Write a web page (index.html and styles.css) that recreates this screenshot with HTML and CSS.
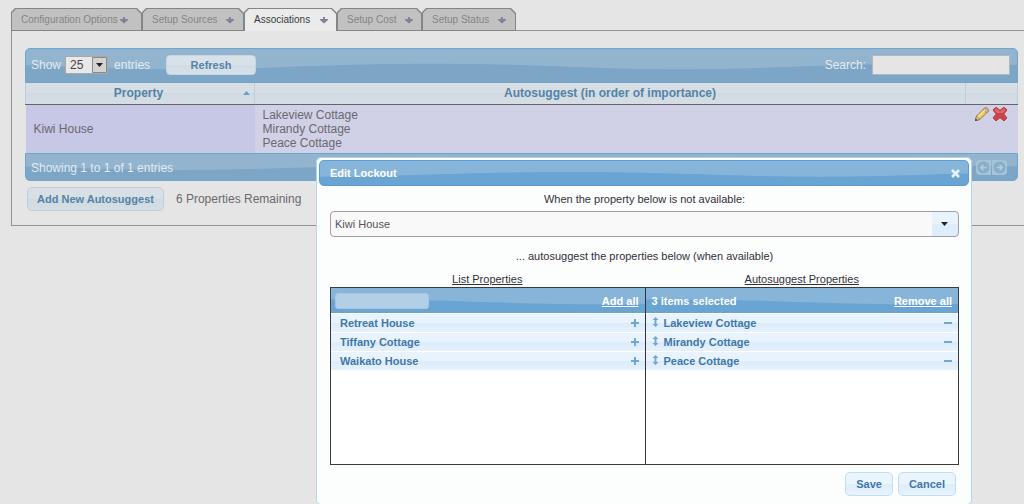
FILE: index.html
```html
<!DOCTYPE html>
<html lang="en">
<head>
<meta charset="utf-8">
<title>Associations</title>
<link rel="stylesheet" href="styles.css">
</head>
<body>
<svg class="defs" aria-hidden="true">
  <symbol id="tab-arrow" viewBox="0 0 8 8"><path d="M3 1h2v2h3v1L4 7.500 0 4V3h3z"/></symbol>
  <symbol id="updown" viewBox="0 0 7 10"><path d="M3.500 0L6.500 3H4.500V7H6.500L3.500 10 .5 7H2.500V3H.5z"/></symbol>
  <symbol id="plus" viewBox="0 0 8 8"><path d="M3 0h2v3h3v2H5v3H3V5H0V3h3z"/></symbol>
  <symbol id="minus" viewBox="0 0 8 8"><path d="M0 3h8v2H0z"/></symbol>
</svg>

<main class="page">
  <nav class="tabs" role="tablist">
    <button class="tab" role="tab"><span>Configuration Options</span><svg><use href="#tab-arrow"/></svg></button>
    <button class="tab" role="tab"><span>Setup Sources</span><svg><use href="#tab-arrow"/></svg></button>
    <button class="tab tab-active" role="tab" aria-selected="true"><span>Associations</span><svg><use href="#tab-arrow"/></svg></button>
    <button class="tab" role="tab"><span>Setup Cost</span><svg><use href="#tab-arrow"/></svg></button>
    <button class="tab" role="tab"><span>Setup Status</span><svg><use href="#tab-arrow"/></svg></button>
  </nav>

  <section class="panel">
    <div class="bar bar-top">
      <label for="length">Show</label>
      <select id="length" class="length"><option>25</option><option>50</option></select>
      <span>entries</span>
      <button class="refresh">Refresh</button>
      <label class="search-label" for="search">Search:</label>
      <input id="search" class="search" type="text">
    </div>
    <table class="grid">
      <thead>
        <tr>
          <th class="col-property">Property<svg class="sort" viewBox="0 0 7 4"><path d="M3.500 0L7 4H0z"/></svg></th>
          <th>Autosuggest (in order of importance)</th>
          <th class="col-actions"></th>
        </tr>
      </thead>
      <tbody>
        <tr>
          <td class="sorted">Kiwi House</td>
          <td>Lakeview Cottage<br>Mirandy Cottage<br>Peace Cottage</td>
          <td class="actions">
            <button class="icon" aria-label="Edit"><svg viewBox="0 0 16 16"><path d="M1.500 14.500l1-4.500L10.500 2q1.500-1 3 .5t.5 3L6 13.500z" fill="#e3c765" stroke="#a4803f"/><path d="M10.500 2q1.500-1 3 .5t.5 3l-1.500 1.500-3.500-3.500z" fill="#d3a9a0" stroke="#a4803f" stroke-width=".7"/><path d="M4 11l7-7" stroke="#f4e6a0" stroke-width="1.500"/><path d="M2.500 10L6 13.500l-4.500 1z" fill="#dcc6a4" stroke="#8b704a" stroke-width=".7"/><path d="M1 15l.7-2.500 1.800 1.800z" fill="#3d3935"/></svg></button>
            <button class="icon" aria-label="Delete"><svg viewBox="0 0 16 16"><path d="M4 1.200L8 4.300l4-3.100L15 4l-3.200 4L15 12l-3 2.900-4-3.200-4 3.200L1 12l3.200-4L1 4z" fill="#c9444b" stroke="#bd3a40" stroke-linejoin="round"/><path d="M4 2.200L8 5.500l4-3.300 1.700 1.900L10.800 7H5.200L2.300 4.100z" fill="#d9686b"/></svg></button>
          </td>
        </tr>
      </tbody>
    </table>
    <div class="bar bar-bottom">
      <span>Showing 1 to 1 of 1 entries</span>
      <div class="pager">
        <button aria-label="Previous"><svg viewBox="0 0 12 12"><circle cx="6" cy="6" r="5.500" fill="#86adca"/><path d="M9 6H3.500M6 3.500L3.500 6 6 8.500" fill="none" stroke="#b4cddd" stroke-width="1.500"/></svg></button>
        <button aria-label="Next"><svg viewBox="0 0 12 12"><circle cx="6" cy="6" r="5.500" fill="#86adca"/><path d="M3 6h5.500M6 3.500L8.500 6 6 8.500" fill="none" stroke="#b4cddd" stroke-width="1.500"/></svg></button>
      </div>
    </div>
    <div class="below">
      <button class="add">Add New Autosuggest</button>
      <span>6 Properties Remaining</span>
    </div>
  </section>
</main>

<div class="dialog" role="dialog" aria-labelledby="dialog-title">
  <header class="titlebar">
    <span id="dialog-title">Edit Lockout</span>
    <button class="close" aria-label="Close"><svg viewBox="0 0 9 9"><path d="M1 1l7 7m0-7l-7 7" stroke="#e9f3fa" stroke-width="2.600"/></svg></button>
  </header>
  <div class="content">
    <label class="prompt" for="property">When the property below is not available:</label>
    <select id="property" class="property"><option>Kiwi House</option></select>
    <p class="hint">... autosuggest the properties below (when available)</p>
    <div class="headings"><span>List Properties</span><span>Autosuggest Properties</span></div>
    <div class="lists">
      <section class="list">
        <div class="list-head">
          <input class="filter" type="text" aria-label="Filter properties">
          <a href="#">Add all</a>
        </div>
        <ul>
          <li><span>Retreat House</span><button aria-label="Add Retreat House"><svg><use href="#plus"/></svg></button></li>
          <li><span>Tiffany Cottage</span><button aria-label="Add Tiffany Cottage"><svg><use href="#plus"/></svg></button></li>
          <li><span>Waikato House</span><button aria-label="Add Waikato House"><svg><use href="#plus"/></svg></button></li>
        </ul>
      </section>
      <section class="list list-chosen">
        <div class="list-head">
          <span>3 items selected</span>
          <a href="#">Remove all</a>
        </div>
        <ul>
          <li><svg class="drag"><use href="#updown"/></svg><span>Lakeview Cottage</span><button aria-label="Remove Lakeview Cottage"><svg><use href="#minus"/></svg></button></li>
          <li><svg class="drag"><use href="#updown"/></svg><span>Mirandy Cottage</span><button aria-label="Remove Mirandy Cottage"><svg><use href="#minus"/></svg></button></li>
          <li><svg class="drag"><use href="#updown"/></svg><span>Peace Cottage</span><button aria-label="Remove Peace Cottage"><svg><use href="#minus"/></svg></button></li>
        </ul>
      </section>
    </div>
    <footer class="buttons">
      <button>Save</button>
      <button>Cancel</button>
    </footer>
  </div>
</div>
</body>
</html>
```
FILE: styles.css
```css
* { box-sizing: border-box; }
body {
  margin: 0;
  background: #e5e5e5;
  color: #6b6870;
  font: 12px/14px "Liberation Sans", Arial, sans-serif;
  overflow-x: hidden;
}
button, input, select { font: inherit; color: inherit; margin: 0; padding: 0; border: 0; background: none; }
button { cursor: pointer; }
svg { display: block; }
.defs { display: none; }
.page { padding: 8px 0 0 11px; }

.tabs {
  display: grid;
  grid-template-columns: 131px 102px 93px 85px 94px;
  height: 23px;
}
.tab {
  position: relative;
  display: flex;
  align-items: center;
  justify-content: space-between;
  padding: 0 14px 0 10px;
  background: #858585;
  color: #858585;
  font-size: 10px;
  white-space: nowrap;
  clip-path: polygon(0 4px, 4px 0, calc(100% - 5px) 0, 100% 5px, 100% 100%, 0 100%);
}
.tab::before {
  content: "";
  position: absolute;
  inset: 1px;
  background: #c1c1c1;
  clip-path: polygon(0 4px, 4px 0, calc(100% - 5px) 0, 100% 5px, 100% 100%, 0 100%);
}
.tab-active { color: #3b3840; z-index: 1; padding-right: 9px; }
.tab-active::before { background: #ebebeb; bottom: 0; }
.tab:nth-child(n + 4) { padding-right: 9px; }
.tab:nth-child(5) { padding-right: 10px; }
.tab:nth-child(2) { padding-right: 10px; }
.tab span, .tab svg { position: relative; }
.tab svg { width: 8px; height: 8px; fill: #83809a; }

.panel {
  margin-top: -1px;
  padding: 17px 6px 14px 13px;
  border: 1px solid #929292;
  border-right: 0;
}
.bar, .titlebar, .list-head {
  display: flex;
  align-items: center;
  background-repeat: repeat-x;
  background-size: 500px 100%;
}
.bar {
  border: 1px solid #6fa4cd;
  background-color: #93b4cf;
  background-image: url("data:image/svg+xml,%3Csvg xmlns='http://www.w3.org/2000/svg' viewBox='0 0 500 36' preserveAspectRatio='none'%3E%3Cpath d='M0 22C90 22 140 16 250 16S410 22 500 22V36H0z' fill='%237da5c5'/%3E%3C/svg%3E");
  background-position: 155px 0;
  color: #e3eaf0;
}
.bar-top { height: 35px; padding: 0 7px 2px 5px; border-radius: 5px 5px 0 0; }
.length {
  appearance: none;
  width: 43px;
  height: 18px;
  margin: 0 6px 0 4px;
  padding-left: 4px;
  border: 1px solid #a8a8a8;
  color: #45424a;
  background: url("data:image/svg+xml,%3Csvg xmlns='http://www.w3.org/2000/svg' viewBox='0 0 15 16'%3E%3Cpath d='M.5.5h14v15H.5z' fill='%23d3d3d3' stroke='%23898989'/%3E%3Cpath d='M4 6h7L7.500 10z' fill='%23222'/%3E%3C/svg%3E") right center / 15px 16px no-repeat #e8e8e8;
}
.refresh {
  width: 90px;
  height: 20px;
  margin-left: 16px;
  border: 1px solid #c4d6e4;
  border-radius: 4px;
  background: linear-gradient(#d9e1e8 50%, #d0dce6 50%, #d6e0e8);
  color: #5483a8;
  font-weight: bold;
  font-size: 11px;
}
.search-label { margin-left: auto; }
.search { width: 138px; height: 20px; margin-left: 6px; border: 1px solid #b0b6bd; background: #e5e5e5; padding: 0 4px; }

.grid { width: 100%; border-collapse: collapse; table-layout: fixed; }
.grid th {
  height: 21px;
  padding: 0 8px;
  background: linear-gradient(#d7dee4 50%, #d0dae2 50%, #d6dee4);
  border: 1px solid #bccddb;
  border-width: 0 1px;
  border-bottom: 1px solid #65636c;
  color: #5483a8;
}
.grid .col-property { width: 229px; padding: 0 4px 0 8px; }
.col-actions { width: 52px; }
.sort { float: right; width: 7px; height: 4px; margin-top: 5px; fill: #6aa0c8; }
.grid td { padding: 3px 8px; background: #d0d1e6; }
.grid .sorted { background: #c7c7e6; }
.grid .actions { padding: 1px 9px 0 8px; vertical-align: top; font-size: 0; white-space: nowrap; }
.icon { width: 16px; height: 16px; margin-right: 2px; }
.bar-bottom { justify-content: space-between; height: 28px; padding: 2px 10px 0 5px; border-radius: 0 0 5px 5px; }
.pager { display: flex; gap: 1px; }
.pager button { width: 15px; height: 15px; padding: 1px; background: #a6c3d7; border-radius: 4px 0 0 4px; }
.pager button + button { border-radius: 0 4px 4px 0; }
.pager svg { width: 13px; height: 13px; }
.below { display: flex; align-items: center; gap: 12px; padding: 6px 2px 0; }
.add {
  padding: 4px 9px;
  border: 1px solid #bdcfdd;
  border-radius: 5px;
  background: linear-gradient(#d8e0e6 50%, #cfdae2 50%, #d5dee4);
  color: #5483a8;
  font-weight: bold;
  font-size: 11px;
}

.dialog {
  position: absolute;
  top: 157px;
  left: 316px;
  right: 52px;
  padding: 2px;
  border: 1px solid #b5d5ee;
  border-radius: 5px;
  background: #fcfefe;
  color: #332f39;
  font-size: 11px;
}
.titlebar, .list-head {
  background-color: #87b5da;
  background-image: url("data:image/svg+xml,%3Csvg xmlns='http://www.w3.org/2000/svg' viewBox='0 0 500 26' preserveAspectRatio='none'%3E%3Cpath d='M0 17C90 17 140 12 250 12S410 17 500 17V26H0z' fill='%236aa4d2'/%3E%3C/svg%3E");
  color: #fff;
  font-weight: bold;
}
.titlebar { justify-content: space-between; height: 26px; padding: 0 8px 0 10px; border: 1px solid #5a9dd3; border-radius: 5px; }
.close { width: 9px; height: 9px; }
.content { padding: 6px 10px 6px 11px; }
.prompt, .hint { display: block; margin: 0; text-align: center; }
.property {
  appearance: none;
  display: block;
  width: 100%;
  height: 26px;
  margin: 5px 0 12px;
  padding-left: 4px;
  border: 1px solid #9f9f9f;
  border-radius: 4px;
  background: url("data:image/svg+xml,%3Csvg xmlns='http://www.w3.org/2000/svg' viewBox='0 0 26 24'%3E%3Cpath d='M0 0h26v24H0z' fill='%23e9f3fd'/%3E%3Cpath d='M0 12h26v12H0z' fill='%23deedfb'/%3E%3Cpath d='M9 10h7l-3.500 4z' fill='%23222'/%3E%3C/svg%3E") right center / 26px 24px no-repeat #f9f9f9;
  color: #55525a;
}
.headings { display: grid; grid-template-columns: 1fr 1fr; margin-top: 9px; text-align: center; text-decoration: underline; }
.lists { display: grid; grid-template-columns: 1fr 1fr; height: 178px; margin-top: 1px; border: 1px solid #3b3b3b; background: #fff; }
.list-chosen { border-left: 1px solid #333; }
.list-head { justify-content: space-between; height: 25px; padding: 0 6px 0 4px; background-position: -231px 0; }
.list-chosen .list-head { padding-left: 6px; }
.list-head a { color: #fff; }
.filter { width: 94px; height: 16px; padding: 0 4px; border: 1px solid #a4c8e3; border-radius: 3px; background: #b3cfe5; }
.list ul { margin: 0; padding: 1px 0 0; list-style: none; }
.list li {
  display: flex;
  align-items: center;
  height: 18px;
  margin-bottom: 1px;
  padding: 0 6px 0 9px;
  background: linear-gradient(#e9f3fd 50%, #dcebfa 50%, #e5f1fc);
  color: #3f78a8;
  font-weight: bold;
}
.list-chosen li { padding-left: 6px; }
.list li button { width: 8px; height: 8px; margin-left: auto; }
.list li button svg { width: 8px; height: 8px; fill: #6ea9d3; }
.list .drag { width: 7px; height: 10px; margin: 0 5px 2px 0; fill: #6ea9d3; }
.buttons { display: flex; justify-content: flex-end; gap: 5px; padding: 7px 3px 0 0; }
.buttons button {
  padding: 4px 10px;
  border: 1px solid #c2dcf2;
  border-radius: 5px;
  background: linear-gradient(#eaf4fd 50%, #deedfb 50%, #e8f3fd);
  color: #3f78a8;
  font-weight: bold;
}
```
